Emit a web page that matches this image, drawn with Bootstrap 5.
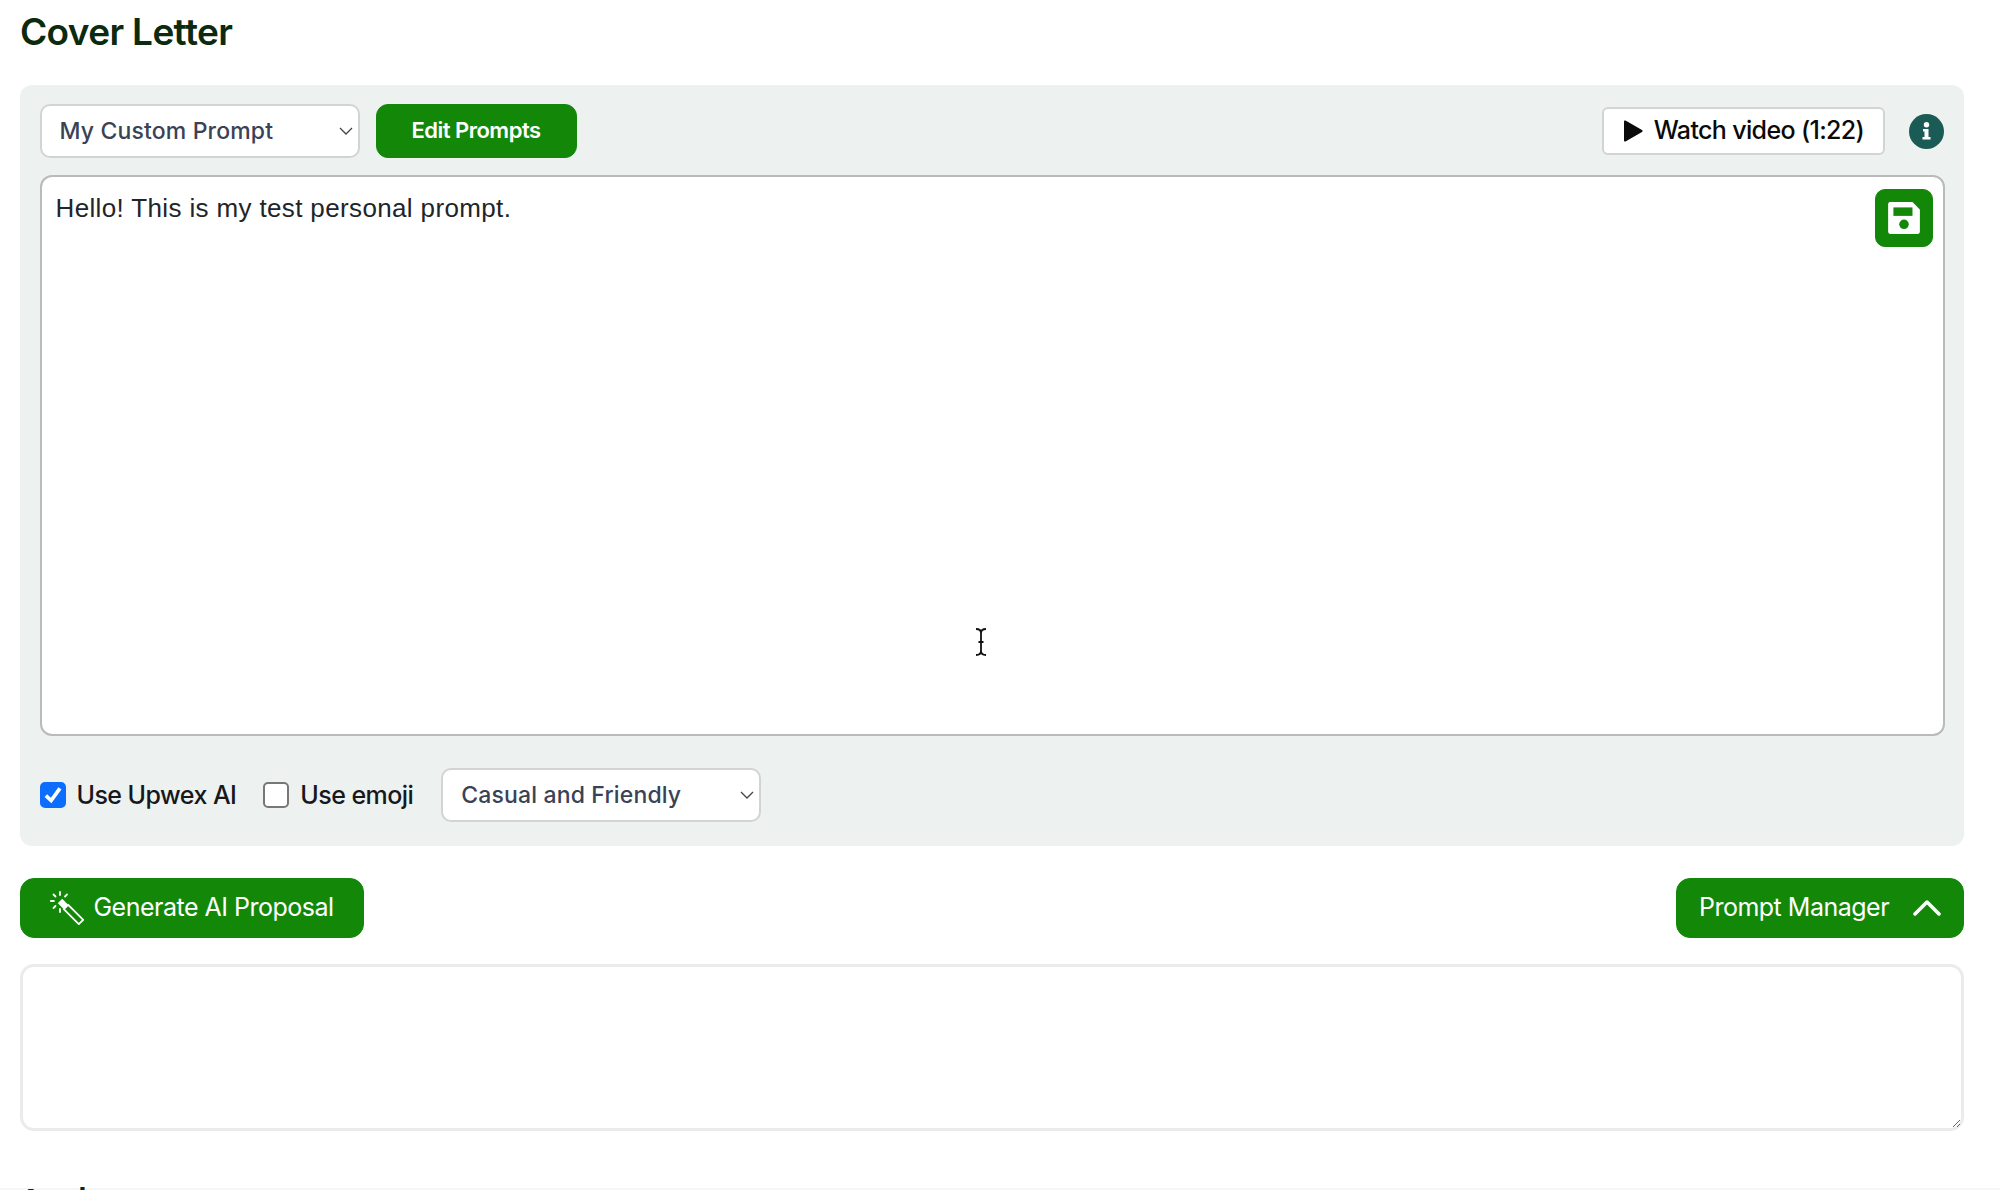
<!doctype html>
<html lang="en">
<head>
<meta charset="utf-8">
<title>Cover Letter</title>
<link href="https://cdn.jsdelivr.net/npm/bootstrap@5.3.0/dist/css/bootstrap.min.css" rel="stylesheet">
<style>
html,body{height:1190px;overflow:hidden;background:#fff}
body{font-family:"Liberation Sans",sans-serif;color:#0b0d0b}
.page-wrap{padding:0 36px 0 20px}
.page-title{font-family:Inter,sans-serif;font-size:37px;font-weight:600;letter-spacing:-.65px;color:#0c2a0e;line-height:44px;margin:10px 0 31px}
.prompt-panel{background:#edf1f0;border-radius:12px;padding:19px 19px 24px 19.5px}
.tool-select{width:320px;height:54px;font-family:Inter,sans-serif;font-size:23px;font-weight:500;letter-spacing:.15px;color:#3a4256;border:2px solid #d2d4d4;border-radius:10px;padding:0 30px 0 18px;background-size:14px 9px;background-position:right 5px center;background-image:url("data:image/svg+xml,%3csvg xmlns='http://www.w3.org/2000/svg' viewBox='0 0 14 9'%3e%3cpath fill='none' stroke='%23444' stroke-width='1.3' d='M1 1l6 6 6-6'/%3e%3c/svg%3e")}
.green-btn{background:#138808;border:1px solid #138808;color:#fff;border-radius:12px;font-family:Inter,sans-serif}
.green-btn:hover{background:#138808;color:#fff;border-color:#138808}
.edit-btn{width:201px;height:54px;font-size:22px;font-weight:600;letter-spacing:-.5px;padding:0 0 2px}
.video-btn{width:283px;height:48px;background:#fff;border:2px solid #d2d4d4;border-radius:6px;color:#0a0a0a;font-family:Inter,sans-serif;font-size:25px;font-weight:500;letter-spacing:-.65px;padding:0;margin-right:24px}
.video-btn:hover{background:#fff;color:#0a0a0a;border-color:#d2d4d4}
.play-glyph{width:20px;height:22px;margin-right:11px;fill:#0a0a0a}
.info-glyph{width:35px;height:35px;margin-right:1px}
.editor-box{margin-top:17px}
.prompt-area{height:561px;font-family:"Liberation Sans",sans-serif;font-size:26px;letter-spacing:.36px;line-height:1.3;color:#212529;border:2px solid #b9bbbb;border-radius:12px;padding:15px 14px;resize:none;display:block}
.save-btn{position:absolute;top:14px;right:12px;width:58px;height:58px;padding:0;border-radius:10px}
.save-btn svg{width:36px;height:36px}
.text-cursor{position:absolute;left:935px;top:453px;width:12px;height:28px}
.option-row{margin-top:32px;height:54px}
.option-check{margin:0;padding:0;font-size:25px;letter-spacing:-.55px;font-family:Inter,sans-serif;font-weight:500;color:#16181b;gap:11px}
.option-check .form-check-input{float:none;margin:0;width:26px;height:26px;border:2px solid #777;border-radius:5px;background-color:#fff;flex:none}
.option-check .form-check-input:checked{background-color:#0d6efd;border-color:#0d6efd;background-size:100% 100%;background-image:url("data:image/svg+xml,%3csvg xmlns='http://www.w3.org/2000/svg' viewBox='0 0 20 20'%3e%3cpath fill='none' stroke='%23fff' stroke-width='3.4' d='M3.500 10.500l4.800 4.500 8-11'/%3e%3c/svg%3e")}
.option-check .form-check-label{line-height:1}
.check-first{margin-right:27px}
.check-second{margin-right:28px}
.action-row{margin-top:32px}
.big-btn{height:60px;font-size:25px;font-weight:400;letter-spacing:-.5px;padding:0;border-radius:14px}
.gen-btn{width:344px}
.mgr-btn{width:288px}
.wand-glyph{width:34px;height:34px;margin-right:9px}
.chev-glyph{width:28px;height:18px;margin-left:24px}
.result-area{margin-top:26px;height:167px;border:3px solid #e9ecea;border-radius:14px;background:#fff}
.cut-heading{font-size:30px;font-weight:700;line-height:22px;margin:57px -36px 0 -20px;padding-left:20px;color:#0c2a0e;background:#f3f8f6}
</style>
</head>
<body>
<div class="page-wrap">
  <h1 class="page-title">Cover Letter</h1>
  <div class="prompt-panel">
    <div class="d-flex align-items-center">
      <select class="form-select tool-select" aria-label="Prompt"><option>My Custom Prompt</option></select>
      <button type="button" class="btn green-btn edit-btn ms-3">Edit Prompts</button>
      <button type="button" class="btn video-btn ms-auto d-inline-flex align-items-center justify-content-center">
        <svg class="play-glyph" viewBox="0 0 20 22" aria-hidden="true"><path d="M1 1.5v19a1 1 0 0 0 1.5.9l16.5-9.5a1 1 0 0 0 0-1.8L2.500.6A1 1 0 0 0 1 1.500z"/></svg>Watch video (1:22)
      </button>
      <svg class="info-glyph" viewBox="0 0 35 35" aria-hidden="true"><circle cx="17.500" cy="17.500" r="17.500" fill="#1a5c55"/><circle cx="17.500" cy="10.800" r="2.700" fill="#fff"/><path fill="#fff" d="M14 15h5.500v8h2v2.500h-8V23h2v-5.500H14z"/></svg>
    </div>
    <div class="editor-box position-relative">
      <textarea class="form-control prompt-area" aria-label="Prompt text">Hello! This is my test personal prompt.</textarea>
      <button type="button" class="btn green-btn save-btn d-flex align-items-center justify-content-center" aria-label="Save">
        <svg viewBox="0 0 34 34" aria-hidden="true"><path fill="#fff" d="M4 2h21l7 7v21a2 2 0 0 1-2 2H4a2 2 0 0 1-2-2V4a2 2 0 0 1 2-2z"/><rect x="7" y="7" width="18" height="8" fill="#138808"/><circle cx="17" cy="23" r="4.500" fill="#138808"/></svg>
      </button>
      <svg class="text-cursor" viewBox="0 0 12 28" aria-hidden="true"><path fill="none" stroke="#111" stroke-width="1.800" d="M1 1c3 0 5 1 5 4v18c0 3-2 4-5 4M11 1c-3 0-5 1-5 4v18c0 3 2 4 5 4M3.500 14h5"/></svg>
    </div>
    <div class="d-flex align-items-center option-row">
      <div class="form-check d-flex align-items-center option-check check-first">
        <input class="form-check-input" type="checkbox" id="useAi" checked>
        <label class="form-check-label" for="useAi">Use Upwex AI</label>
      </div>
      <div class="form-check d-flex align-items-center option-check check-second">
        <input class="form-check-input" type="checkbox" id="useEmoji">
        <label class="form-check-label" for="useEmoji">Use emoji</label>
      </div>
      <select class="form-select tool-select" aria-label="Tone"><option>Casual and Friendly</option></select>
    </div>
  </div>
  <div class="d-flex justify-content-between action-row">
    <button type="button" class="btn green-btn big-btn gen-btn d-inline-flex align-items-center justify-content-center">
      <svg class="wand-glyph" viewBox="0 0 34 34" aria-hidden="true"><path fill="#fff" d="M12.200 7.800l6 6-4.400 4.400-6-6z"/><g fill="none" stroke="#fff" stroke-width="1.800" stroke-linecap="round" stroke-linejoin="round"><path d="M18.200 13.800l15 15-4.400 4.400-15-15z"/><path d="M10 1v3M17 3.500l-2 2M3.500 3.500l2 2M.9 10h3M3.500 17l2-2M10 18v3"/></g></svg>Generate AI Proposal
    </button>
    <button type="button" class="btn green-btn big-btn mgr-btn d-inline-flex align-items-center justify-content-center">Prompt Manager<svg class="chev-glyph" viewBox="0 0 28 18" aria-hidden="true"><path fill="none" stroke="#fff" stroke-width="3.500" stroke-linecap="round" stroke-linejoin="round" d="M2 15L14 3l12 12"/></svg></button>
  </div>
  <textarea class="form-control result-area" aria-label="Proposal"></textarea>
  <div class="cut-heading">Angles</div>
</div>
<script src="https://cdn.jsdelivr.net/npm/bootstrap@5.3.0/dist/js/bootstrap.bundle.min.js"></script>
</body>
</html>
